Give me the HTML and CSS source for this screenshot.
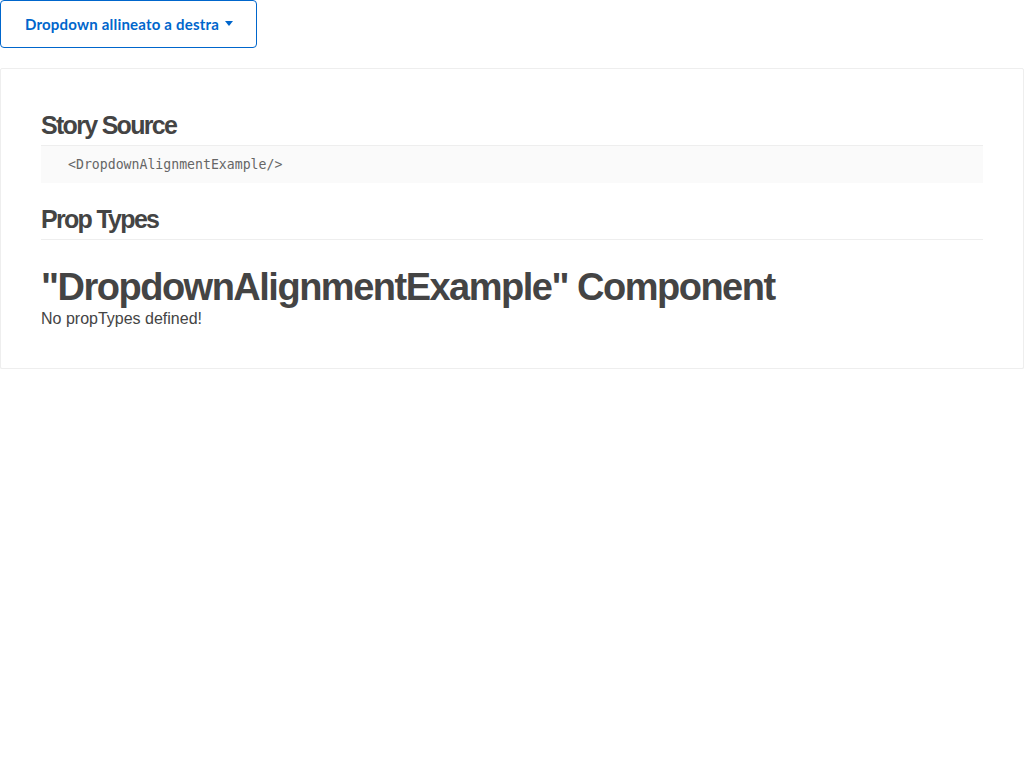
FILE: index.html
```html
<!DOCTYPE html>
<html>
<head>
<meta charset="utf-8">
<link rel="stylesheet" href="styles.css">
</head>
<body>
<div class="story">
  <button class="dd-btn" type="button">Dropdown allineato a destra<span class="caret"></span></button>
</div>
<div class="info">
  <h1 class="section-title">Story Source</h1>
  <pre class="source">&lt;DropdownAlignmentExample/&gt;</pre>
  <h1 class="section-title">Prop Types</h1>
  <div class="props">
    <h2 class="comp-title">"DropdownAlignmentExample" Component</h2>
    <p class="no-props">No propTypes defined!</p>
  </div>
</div>
</body>
</html>
```

FILE: styles.css
```css
html, body {
  margin: 0;
  padding: 0;
  background: #fff;
}
.story {
  display: flex;
}
.dd-btn {
  display: flex;
  align-items: center;
  height: 48px;
  width: 257px;
  padding: 0 24px;
  margin: 0;
  border: 1px solid #0066cc;
  border-radius: 4px;
  background: #fff;
  color: #0066cc;
  font-family: Lato, "Open Sans", sans-serif;
  font-weight: 700;
  font-size: 15px;
  letter-spacing: 0.2px;
  white-space: nowrap;
  cursor: pointer;
  box-sizing: border-box;
}
.caret {
  display: inline-block;
  margin-left: 6px;
  width: 0;
  height: 0;
  border-left: 4px solid transparent;
  border-right: 4px solid transparent;
  border-top: 5px solid #0066cc;
  margin-top: -2px;
}
.info {
  margin-top: 20px;
  border: 1px solid #eee;
  border-radius: 2px;
  box-shadow: 0 2px 3px rgba(0,0,0,0.05);
  padding: 20px 40px 39px;
  background: #fff;
  color: #444;
  font-family: "Liberation Sans", Arial, sans-serif;
  font-size: 15px;
  line-height: 1.45;
}
.section-title {
  margin: 20px 0 0;
  padding: 0 0 4px;
  font-size: 25px;
  font-weight: 700;
  letter-spacing: -1.7px;
  line-height: 32px;
  border-bottom: 1px solid #eee;
  color: #444;
}
.source {
  margin: 0;
  padding: 8px 27px;
  background: #fafafa;
  font-family: "DejaVu Sans Mono", monospace;
  font-size: 13.2px;
  line-height: 21px;
  color: #666;
}
.props {
  padding-top: 25px;
}
.comp-title {
  margin: 0;
  font-size: 38px;
  font-weight: 700;
  letter-spacing: -1.5px;
  line-height: 44px;
  color: #444;
}
.no-props {
  margin: 0;
  font-size: 16px;
  line-height: 20px;
}
```
